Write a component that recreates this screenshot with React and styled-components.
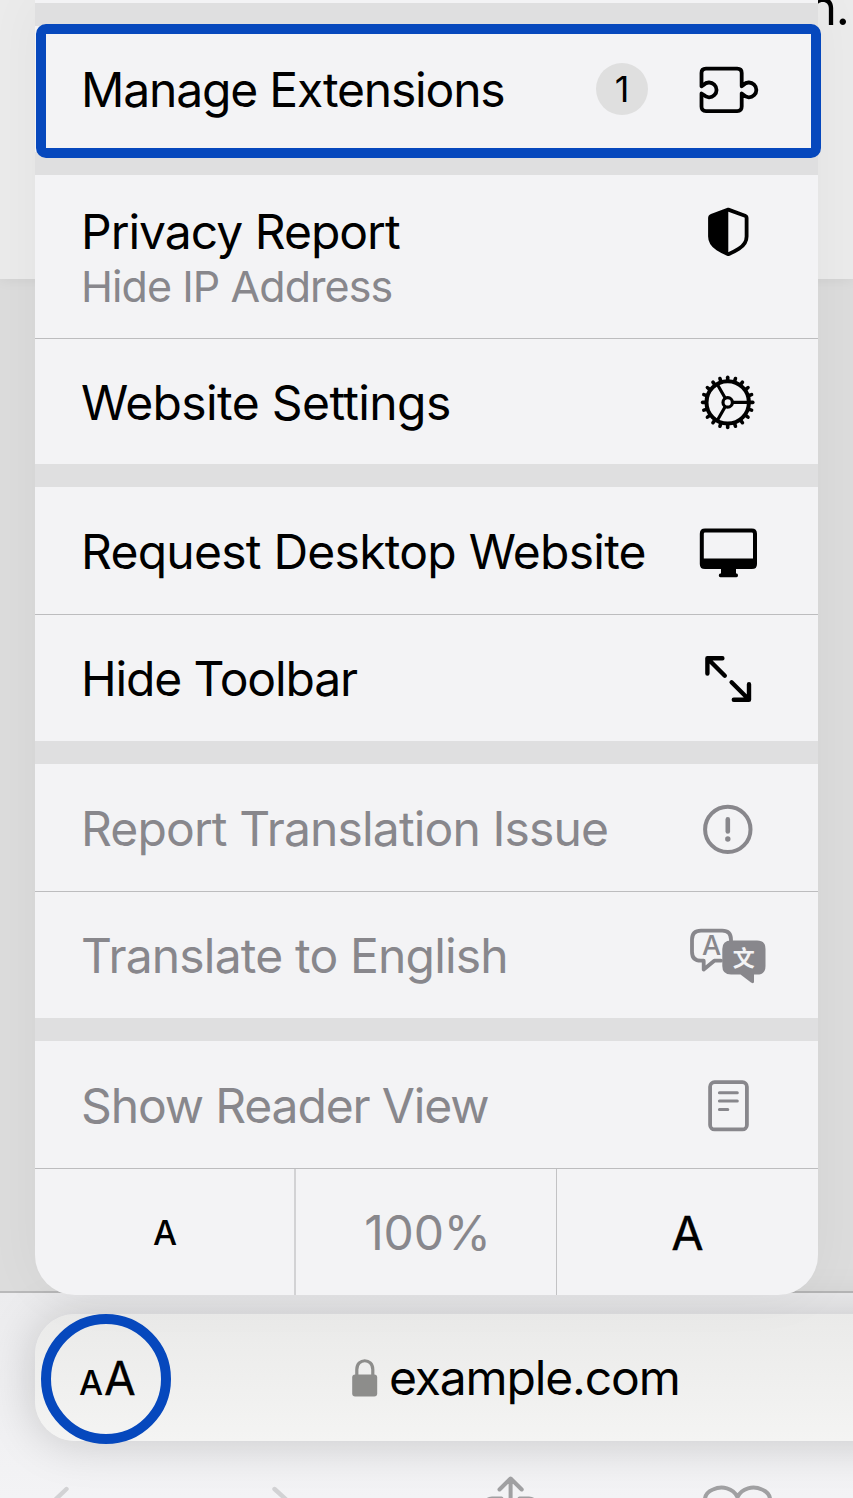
import React from "react";
import styled, { createGlobalStyle } from "styled-components";

const Global = createGlobalStyle`
  *, *::before, *::after { box-sizing: border-box; }
  body { margin: 0; font-family: Inter, "Noto Sans", sans-serif; overflow: hidden; }
`;

const BLUE = "#0648bd";
const GRAY = "#88878c";

const Screen = styled.main`
  position: relative;
  display: flex;
  flex-direction: column;
  width: 853px;
  height: 1498px;
  overflow: hidden;
  background: #dcdcdc;
`;

const PageCard = styled.section`
  height: 279px;
  background: #ebebeb;
  box-shadow: 0 2px 12px rgba(0, 0, 0, 0.05);
  text-align: right;
`;

const PageText = styled.p`
  margin: 0;
  padding: 0 4px 0 0;
  font-size: 49px;
  line-height: 54px;
  margin-top: -19px;
  letter-spacing: -1px;
`;

const Backdrop = styled.div`
  flex: 1;
`;

const BrowserBar = styled.footer`
  display: flex;
  flex-direction: column;
  height: 207px;
  padding: 21px 0 0 35px;
  border-top: 2px solid #b9b9ba;
  background: linear-gradient(#ececee, #f3f3f5);
`;

const AddressBar = styled.div`
  display: flex;
  align-items: center;
  height: 127px;
  flex: none;
  margin-right: -80px;
  padding-left: 44px;
  border-radius: 40px;
  background: linear-gradient(#eaeae9, #f4f4f3);
  box-shadow: 0 1px 48px rgba(0, 0, 0, 0.18);
`;

const TextSizeButton = styled.button`
  display: flex;
  align-items: baseline;
  width: 273px;
  padding: 5px 0 0;
  border: 0;
  background: none;
  font-family: inherit;
  color: #000;
  line-height: 60px;
`;

const Glyph = styled.span`
  font-size: ${(p) => p.$size}px;
  font-weight: ${(p) => p.$weight || 400};
  margin-right: ${(p) => p.$gap || 0}px;
  -webkit-text-stroke: ${(p) => p.$stroke || 0}px currentColor;
`;

const Host = styled.span`
  margin-left: 11px;
  padding-top: 1px;
  font-size: 48px;
  line-height: 60px;
  letter-spacing: ${(p) => p.$track}px;
`;

const ToolRow = styled.nav`
  height: 57px;
  margin-left: -35px;
`;

const Menu = styled.div`
  position: absolute;
  z-index: 2;
  left: 35px;
  top: 0;
  width: 783px;
  height: 1295px;
  display: flex;
  flex-direction: column;
  gap: 23px;
  border-radius: 0 0 40px 40px;
  background: #dfdfe0;
  box-shadow: 0 0 56px rgba(0, 0, 0, 0.045);
  overflow: hidden;
`;

const Group = styled.div`
  display: flex;
  flex-direction: column;
  flex: none;
  height: ${(p) => p.$h}px;
  background: #f3f3f5;
`;

const Row = styled.div`
  display: flex;
  align-items: ${(p) => (p.$top ? "flex-start" : "center")};
  flex: 0 0 ${(p) => p.$h || 127}px;
  padding: ${(p) => (p.$top ? "25px" : p.$line ? "0" : "2px")} 50px 0 46px;
  border-top: ${(p) => (p.$line ? "1px solid #bcbcbe" : "0")};
  color: ${(p) => (p.$muted ? GRAY : "#000")};
`;

const Labels = styled.div`
  flex: 1;
  padding-top: ${(p) => (p.$flush ? 0 : 2)}px;
  white-space: nowrap;
`;

const Title = styled.div`
  font-size: 48px;
  line-height: 64px;
  letter-spacing: ${(p) => p.$track}px;
`;

const Subtitle = styled.div`
  margin-top: -6px;
  font-size: 43px;
  line-height: 56px;
  color: ${GRAY};
  letter-spacing: ${(p) => p.$track}px;
`;

const Count = styled.span`
  display: grid;
  place-items: center;
  width: 52px;
  height: 52px;
  margin: -2px 40px 0 0;
  border-radius: 50%;
  background: #dfdfdf;
  font-size: 36px;
`;

const IconBox = styled.svg`
  display: block;
  flex: none;
  width: 80px;
  height: 64px;
  overflow: visible;
  font-family: Inter, "Noto Sans CJK SC", sans-serif;
`;

const ZoomRow = styled.div`
  display: grid;
  grid-template-columns: 259px 262px 1fr;
  flex: 1;
  border-top: 1px solid #bcbcbe;
`;

const ZoomCell = styled.div`
  display: flex;
  align-items: center;
  justify-content: center;
  padding: 1px 0 0 ${(p) => p.$shift || 0}px;
  border-left: ${(p) => (p.$line ? `${p.$line}px solid ${p.$line > 1 ? "#d2d2d4" : "#c2c2c4"}` : "0")};
  color: ${(p) => (p.$muted ? GRAY : "#000")};
  font-size: ${(p) => p.$size}px;
  letter-spacing: ${(p) => p.$track || 0}px;
`;

const RowHighlight = styled.div`
  position: absolute;
  z-index: 5;
  left: 36px;
  top: 24px;
  width: 785px;
  height: 134px;
  border: 10px solid ${BLUE};
  border-radius: 10px;
`;

const ButtonHighlight = styled.div`
  position: absolute;
  z-index: 5;
  left: 41px;
  top: 1314px;
  width: 130px;
  height: 130px;
  border: 10px solid ${BLUE};
  border-radius: 50%;
`;

const Icon = ({ children, w = 4 }) => (
  <IconBox viewBox="0 0 80 64" fill="none" stroke="currentColor" strokeWidth={w} strokeLinecap="round" strokeLinejoin="round">
    {children}
  </IconBox>
);

const PuzzleIcon = () => (
  <Icon w={3.8}>
    <path d="M18 10.6H49.2Q53.7 10.6 53.7 15.1V28.3L55.4 27A7.4 7.4 0 1 1 55.4 36.8L53.7 35.5V48.6Q53.7 53.1 49.2 53.1H18Q13.5 53.1 13.5 48.6V35.5L15.6 36.8A7.4 7.4 0 1 0 15.6 27L13.5 28.3V15.1Q13.5 10.6 18 10.6Z" />
  </Icon>
);

const ShieldIcon = () => (
  <Icon w={3.8}>
    <path d="M40.3 9.6L57 15.7Q58.6 16.3 58.6 18V36.5C58.6 42.5 55.5 45.8 51 48.7Q46 52 40.3 54.2Q34.6 52 29.6 48.7C25.1 45.8 22 42.5 22 36.5V18Q22 16.3 23.6 15.7Z" />
    <path d="M40.3 9.6V54.2Q34.6 52 29.6 48.7C25.1 45.8 22 42.5 22 36.5V18Q22 16.3 23.6 15.7Z" fill="currentColor" stroke="none" />
  </Icon>
);

const GearIcon = () => (
  <Icon w={3.2}>
    <circle cx="39.7" cy="32.4" r="21.2" strokeWidth="4" />
    <circle cx="39.7" cy="32.4" r="4.7" />
    {[0, 120, 240].map((a) => (
      <path key={a} d="M44.8 32.4H60" transform={`rotate(${a} 39.7 32.4)`} />
    ))}
    {Array.from({ length: 20 }, (_, i) => (
      <path key={i} d="M62.2 32.4H64.8" strokeWidth="3.6" transform={`rotate(${i * 18} 39.7 32.4)`} />
    ))}
  </Icon>
);

const DesktopIcon = () => (
  <Icon>
    <path d="M17 8.6H63.8Q69 8.6 69 13.8V43.9Q69 49.1 63.8 49.1H17Q11.8 49.1 11.8 43.9V13.8Q11.8 8.6 17 8.6ZM17 12.6Q15.8 12.6 15.8 13.8V38.4H65V13.8Q65 12.6 63.8 12.6Z" fill="currentColor" fillRule="evenodd" stroke="none" />
    <path d="M33 48H48V53.4H49Q50 53.9 50 55.5T48.5 57.3H32.4Q30.8 57.3 30.8 55.5T32 53.4H33Z" fill="currentColor" stroke="none" />
  </Icon>
);

const ExpandIcon = () => (
  <Icon w={4.4}>
    <path d="M34.4 12.3H19.4V27.5M19.8 12.7L36.8 29.7M45.8 53.7H61V38.2M60.6 53.3L43.6 36.3" />
  </Icon>
);

const AlertIcon = () => (
  <Icon>
    <circle cx="39.8" cy="32.4" r="22.7" />
    <path d="M39.8 22.4V34.5" strokeWidth="4.6" />
    <circle cx="39.8" cy="42" r="2.7" fill="currentColor" stroke="none" />
  </Icon>
);

const TranslateIcon = () => (
  <Icon w={3.8}>
    <path d="M33 37.7H26.3L15.7 46.5V37.7H13Q4 37.7 4 28.7V16.6Q4 7.6 13 7.6H34.2Q43 7.6 43 16.6V18" />
    <text x="23.6" y="31.7" fontSize="27" fontWeight="500" textAnchor="middle" fill="currentColor" stroke="none">A</text>
    <path d="M43 17.5H69Q77.5 17.5 77.5 26V43Q77.5 51.5 69 51.5H66V58.5Q66 61.5 63 59.5L52.5 51.5H43Q34.3 51.5 34.3 43V26Q34.3 17.5 43 17.5Z" fill="currentColor" stroke="none" />
    <text x="55.8" y="42.5" fontSize="22" fontWeight="700" textAnchor="middle" fill="#f3f3f5" stroke="none">文</text>
  </Icon>
);

const ReaderIcon = () => (
  <Icon w={3.8}>
    <rect x="22.1" y="8.2" width="36.8" height="47.2" rx="4.5" />
    <path d="M31.4 18.7H49.3M31.4 27H49.3M31.4 35.4H39.8" strokeWidth="3" />
  </Icon>
);

const LockSvg = styled.svg`
  width: 26px;
  height: 38px;
  flex: none;
  color: #8d8d8b;
`;

const LockIcon = () => (
  <LockSvg viewBox="0 0 26 38" fill="none" stroke="currentColor">
    <path d="M4.8 18V10.5C4.8 -1.2 20.8 -1.2 20.8 10.5V18" strokeWidth="3.2" />
    <rect x="0.2" y="15.6" width="25" height="22" rx="3" fill="currentColor" stroke="none" />
  </LockSvg>
);

const ToolSvg = styled.svg`
  display: block;
  width: 853px;
  height: 58px;
`;

const ToolIcons = () => (
  <ToolSvg viewBox="0 0 853 58" fill="none" strokeWidth="4.4" strokeLinecap="round" strokeLinejoin="round">
    <path d="M66.5 48L46 67.5M274.5 48L296 67.5" stroke="#d2d2d4" />
    <path d="M510.6 39V68M499.5 48.5L510.6 37.5L521.7 48.5M501.5 57.5H492Q487 57.5 486 62M519.5 57.5H529Q534 57.5 535 62" stroke="#a0a0a2" strokeWidth="4" />
    <path d="M705 61Q704 52 713 48.5C722 44.5 733 47 737.5 56C742 47 753 44.5 762 48.5Q771 52 770 61M737.5 56V64" stroke="#a0a0a2" strokeWidth="4" />
  </ToolSvg>
);

export default function App() {
  return (
    <>
      <Global />
      <Screen>
        <PageCard>
          <PageText>n.</PageText>
        </PageCard>
        <Backdrop />
        <BrowserBar>
          <AddressBar>
            <TextSizeButton aria-label="Page settings">
              <Glyph $size={34} $weight={500} $gap={1}>A</Glyph>
              <Glyph $size={46} $stroke={0.3}>A</Glyph>
            </TextSizeButton>
            <LockIcon />
            <Host $track={-1.15}>example.com</Host>
          </AddressBar>
          <ToolRow>
            <ToolIcons />
          </ToolRow>
        </BrowserBar>

        <Menu>
          <Group $h={3} />
          <Group $h={126}>
            <Row $h={126}>
              <Labels $flush><Title $track={-1.18}>Manage Extensions</Title></Labels>
              <Count>1</Count>
              <PuzzleIcon />
            </Row>
          </Group>
          <Group $h={289}>
            <Row $top $h={163}>
              <Labels $flush>
                <Title $track={-1}>Privacy Report</Title>
                <Subtitle $track={-0.93}>Hide IP Address</Subtitle>
              </Labels>
              <ShieldIcon />
            </Row>
            <Row $line $h={126}>
              <Labels><Title $track={-0.63}>Website Settings</Title></Labels>
              <GearIcon />
            </Row>
          </Group>
          <Group $h={254}>
            <Row>
              <Labels $flush><Title $track={-0.75}>Request Desktop Website</Title></Labels>
              <DesktopIcon />
            </Row>
            <Row $line>
              <Labels><Title $track={-1.12}>Hide Toolbar</Title></Labels>
              <ExpandIcon />
            </Row>
          </Group>
          <Group $h={254}>
            <Row $muted>
              <Labels $flush><Title $track={-0.86}>Report Translation Issue</Title></Labels>
              <AlertIcon />
            </Row>
            <Row $line $muted>
              <Labels><Title $track={-0.83}>Translate to English</Title></Labels>
              <TranslateIcon />
            </Row>
          </Group>
          <Group $h={254}>
            <Row $muted>
              <Labels $flush><Title $track={-1.13}>Show Reader View</Title></Labels>
              <ReaderIcon />
            </Row>
            <ZoomRow>
              <ZoomCell $size={34} $shift={1}><Glyph $size={34} $weight={500}>A</Glyph></ZoomCell>
              <ZoomCell $line={2} $shift={3} $muted $size={48} $track={-0.2}>100%</ZoomCell>
              <ZoomCell $line={1} $size={47}><Glyph $size={47} $stroke={0.3}>A</Glyph></ZoomCell>
            </ZoomRow>
          </Group>
        </Menu>

        <RowHighlight />
        <ButtonHighlight />
      </Screen>
    </>
  );
}
